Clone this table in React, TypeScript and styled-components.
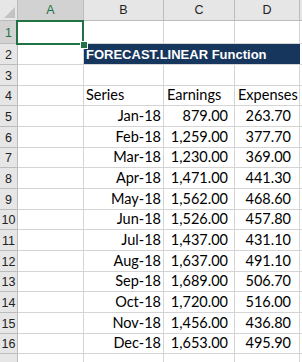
import React from "react";
import styled, { createGlobalStyle } from "styled-components";

const Global = createGlobalStyle`
  html, body { margin: 0; padding: 0; background: #ffffff; }
  body { width: 302px; height: 362px; overflow: hidden; }
`;

const COLS = "18px 66px 80px 71px 65px 1fr";
const ROW_HEIGHTS = [23, 21, 21, 20, 21, 21, 20, 21, 21, 20, 21, 21, 20, 21, 21, 20, 21];

const Sheet = styled.div`
  position: relative;
  display: grid;
  grid-template-columns: ${COLS};
  width: 302px;
  height: 362px;
  overflow: hidden;
  background: #ffffff;
`;

const Corner = styled.div`
  position: relative;
  height: 21px;
  box-sizing: border-box;
  background: #e6e6e6;
  border-right: 1px solid #bcbcbc;
  border-bottom: 1px solid #bcbcbc;
  &::after {
    content: "";
    position: absolute;
    right: 2px;
    bottom: 2px;
    width: 0;
    height: 0;
    border-left: 11px solid transparent;
    border-bottom: 11px solid #c3c3c3;
  }
`;

const ColHead = styled.div<{ $active?: boolean }>`
  height: 21px;
  box-sizing: border-box;
  display: flex;
  align-items: center;
  justify-content: center;
  background: ${(p) => (p.$active ? "#d2d2d2" : "#e6e6e6")};
  border-right: 1px solid #bcbcbc;
  border-bottom: 1px solid #bcbcbc;
  color: ${(p) => (p.$active ? "#217346" : "#222222")};
  font-family: "Liberation Sans", Arial, sans-serif;
  font-size: 12.5px;
`;

const RowHead = styled.div<{ $h: number; $active?: boolean }>`
  height: ${(p) => p.$h}px;
  box-sizing: border-box;
  display: flex;
  align-items: center;
  justify-content: center;
  background: ${(p) => (p.$active ? "#d2d2d2" : "#e6e6e6")};
  border-right: 1px solid #bcbcbc;
  border-bottom: 1px solid #bcbcbc;
  color: ${(p) => (p.$active ? "#217346" : "#222222")};
  font-family: "Liberation Sans", Arial, sans-serif;
  font-size: 12.5px;
  padding-top: 1px;
`;

const Cell = styled.div<{ $h: number; $align?: "left" | "right"; $pad?: number }>`
  height: ${(p) => p.$h}px;
  box-sizing: border-box;
  display: flex;
  align-items: flex-end;
  justify-content: ${(p) => (p.$align === "right" ? "flex-end" : "flex-start")};
  padding: 0 ${(p) => (p.$align === "right" ? p.$pad ?? 2 : 2)}px 1px ${(p) => (p.$align === "right" ? 2 : p.$pad ?? 2)}px;
  border-right: 1px solid #d4d4d4;
  border-bottom: 1px solid #d4d4d4;
  font-family: Lato, "Open Sans", sans-serif;
  font-size: 14.5px;
  line-height: 18px;
  color: #000000;
  white-space: nowrap;
`;

const TitleCell = styled.div<{ $h: number }>`
  grid-column: span 3;
  height: ${(p) => p.$h}px;
  box-sizing: border-box;
  display: flex;
  align-items: center;
  padding: 1px 0 0 2px;
  background: #17365d;
  border-bottom: 1px solid #d4d4d4;
  color: #ffffff;
  font-family: "Liberation Sans", Arial, sans-serif;
  font-weight: 700;
  font-size: 13px;
  white-space: nowrap;
`;

const Selection = styled.div`
  position: absolute;
  left: 16px;
  top: 20px;
  width: 68px;
  height: 25px;
  box-sizing: border-box;
  border: 2px solid #217346;
  pointer-events: none;
`;

const FillHandle = styled.div`
  position: absolute;
  left: 80px;
  top: 41px;
  width: 6px;
  height: 6px;
  background: #217346;
  border: 1px solid #ffffff;
  box-sizing: content-box;
`;

const data: [string, string, string][] = [
  ["Jan-18", "879.00", "263.70"],
  ["Feb-18", "1,259.00", "377.70"],
  ["Mar-18", "1,230.00", "369.00"],
  ["Apr-18", "1,471.00", "441.30"],
  ["May-18", "1,562.00", "468.60"],
  ["Jun-18", "1,526.00", "457.80"],
  ["Jul-18", "1,437.00", "431.10"],
  ["Aug-18", "1,637.00", "491.10"],
  ["Sep-18", "1,689.00", "506.70"],
  ["Oct-18", "1,720.00", "516.00"],
  ["Nov-18", "1,456.00", "436.80"],
  ["Dec-18", "1,653.00", "495.90"],
];

export default function App() {
  const rows: React.ReactNode[] = [];
  for (let r = 1; r <= 17; r++) {
    const h = ROW_HEIGHTS[r - 1];
    rows.push(
      <RowHead key={`h${r}`} $h={h} $active={r === 1}>
        {r <= 16 ? r : null}
      </RowHead>
    );
    if (r === 2) {
      rows.push(<Cell key={`a${r}`} $h={h} />);
      rows.push(
        <TitleCell key={`t${r}`} $h={h}>
          FORECAST.LINEAR Function
        </TitleCell>
      );
      rows.push(<Cell key={`e${r}`} $h={h} />);
      continue;
    }
    let b: React.ReactNode = null;
    let c: React.ReactNode = null;
    let d: React.ReactNode = null;
    let numeric = false;
    if (r === 4) {
      b = "Series";
      c = "Earnings";
      d = "Expenses";
    } else if (r >= 5 && r <= 16) {
      [b, c, d] = data[r - 5];
      numeric = true;
    }
    rows.push(<Cell key={`a${r}`} $h={h} />);
    rows.push(
      <Cell key={`b${r}`} $h={h} $align={numeric ? "right" : "left"} $pad={2}>
        {b}
      </Cell>
    );
    rows.push(
      <Cell key={`c${r}`} $h={h} $align={numeric ? "right" : "left"} $pad={numeric ? 6 : 3}>
        {c}
      </Cell>
    );
    rows.push(
      <Cell key={`d${r}`} $h={h} $align={numeric ? "right" : "left"} $pad={numeric ? 8 : 3}>
        {d}
      </Cell>
    );
    rows.push(<Cell key={`e${r}`} $h={h} />);
  }

  return (
    <>
      <Global />
      <Sheet>
        <Corner />
        <ColHead $active>A</ColHead>
        <ColHead>B</ColHead>
        <ColHead>C</ColHead>
        <ColHead>D</ColHead>
        <ColHead />
        {rows}
        <Selection />
        <FillHandle />
      </Sheet>
    </>
  );
}
